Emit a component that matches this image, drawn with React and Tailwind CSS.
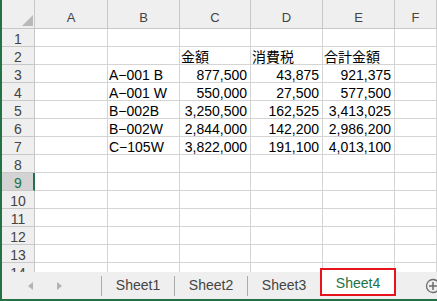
import React from "react";

const cols = ["A", "B", "C", "D", "E", "F"];

const data = {
  2: ["", "", "金額", "消費税", "合計金額", ""],
  3: ["", "A−001 B", "877,500", "43,875", "921,375", ""],
  4: ["", "A−001 W", "550,000", "27,500", "577,500", ""],
  5: ["", "B−002B", "3,250,500", "162,525", "3,413,025", ""],
  6: ["", "B−002W", "2,844,000", "142,200", "2,986,200", ""],
  7: ["", "C−105W", "3,822,000", "191,100", "4,013,100", ""],
};

function Cell({ row, ci, value }) {
  const isNum = row >= 3 && (ci === 2 || ci === 3 || ci === 4);
  return (
    <div
      className={
        "border-r border-b border-[#d4d4d4] flex items-end overflow-hidden whitespace-nowrap text-[14px] leading-[12px] text-black pb-[1px] " +
        (isNum ? "justify-end pr-[3px]" : "justify-start pl-[1px]")
      }
    >
      {value}
    </div>
  );
}

export default function App() {
  const rows = Array.from({ length: 14 }, (_, i) => i + 1);
  return (
    <div className="w-[437px] h-[301px] overflow-hidden bg-white border-l-2 border-b-2 border-[#217346] flex flex-col font-['Liberation_Sans','Noto_Sans_CJK_JP',sans-serif]">
      <div className="h-[272px] shrink-0 overflow-hidden">
        <div className="grid grid-cols-[33px_73px_72px_71px_72px_72px_1fr] grid-rows-[29px_repeat(14,18px)]">
          {/* corner */}
          <div className="bg-[#efefef] border-r border-b border-[#c8c8c8] flex justify-end items-end pr-[1px] pb-[2px]">
            <svg width="11" height="11" viewBox="0 0 11 11">
              <polygon points="0,11 11,0 11,11" fill="#b9b9b9" />
            </svg>
          </div>
          {cols.map((c) => (
            <div
              key={c}
              className="bg-[#efefef] border-r border-b border-[#c8c8c8] flex items-end justify-center pb-[4px] text-[13px] leading-[12px] text-[#444]"
            >
              {c}
            </div>
          ))}
          {rows.map((r) => (
            <React.Fragment key={r}>
              {r === 9 ? (
                <div className="bg-[#d3d3d3] border-r-2 border-r-[#217346] border-b border-b-[#c8c8c8] flex items-end justify-center pb-[1px] pl-[1px] text-[14px] leading-[12px] text-[#217346]">
                  {r}
                </div>
              ) : (
                <div className="bg-[#efefef] border-r border-b border-[#c8c8c8] flex items-end justify-center pb-[1px] text-[14px] leading-[12px] text-[#444]">
                  {r}
                </div>
              )}
              {cols.map((c, ci) => (
                <Cell key={c} row={r} ci={ci} value={data[r] ? data[r][ci] : ""} />
              ))}
            </React.Fragment>
          ))}
        </div>
      </div>
      <div className="h-[27px] shrink-0 bg-[#efefef] flex items-stretch text-[14px] text-[#444]">
        <div className="w-[99px] shrink-0 flex items-center pl-[26px] gap-[24px]">
          <svg width="5" height="8" viewBox="0 0 5 8">
            <polygon points="5,0 0,4 5,8" fill="#b3b3b3" />
          </svg>
          <svg width="5" height="8" viewBox="0 0 5 8">
            <polygon points="0,0 5,4 0,8" fill="#b3b3b3" />
          </svg>
        </div>
        <div className="w-px h-[20px] self-center bg-[#ababab]" />
        <div className="w-[72px] flex items-center justify-center">Sheet1</div>
        <div className="w-px h-[20px] self-center bg-[#ababab]" />
        <div className="w-[72px] flex items-center justify-center">Sheet2</div>
        <div className="w-px h-[20px] self-center bg-[#ababab]" />
        <div className="w-[72px] flex items-center justify-center">Sheet3</div>
        <div className="w-[76px] h-[28px] -mt-[4px] bg-white border-2 border-[#e8141c] flex items-center justify-center pt-[3px] text-[#217346]">
          Sheet4
        </div>
        <div className="flex-1" />
        <div className="flex items-center -mr-[4px]">
          <svg width="16" height="16" viewBox="0 0 16 16">
            <circle cx="8" cy="8" r="6.5" fill="none" stroke="#6b6b6b" strokeWidth="1.3" />
            <line x1="8" y1="4" x2="8" y2="12" stroke="#6b6b6b" strokeWidth="1.5" />
            <line x1="4" y1="8" x2="12" y2="8" stroke="#6b6b6b" strokeWidth="1.5" />
          </svg>
        </div>
      </div>
    </div>
  );
}
